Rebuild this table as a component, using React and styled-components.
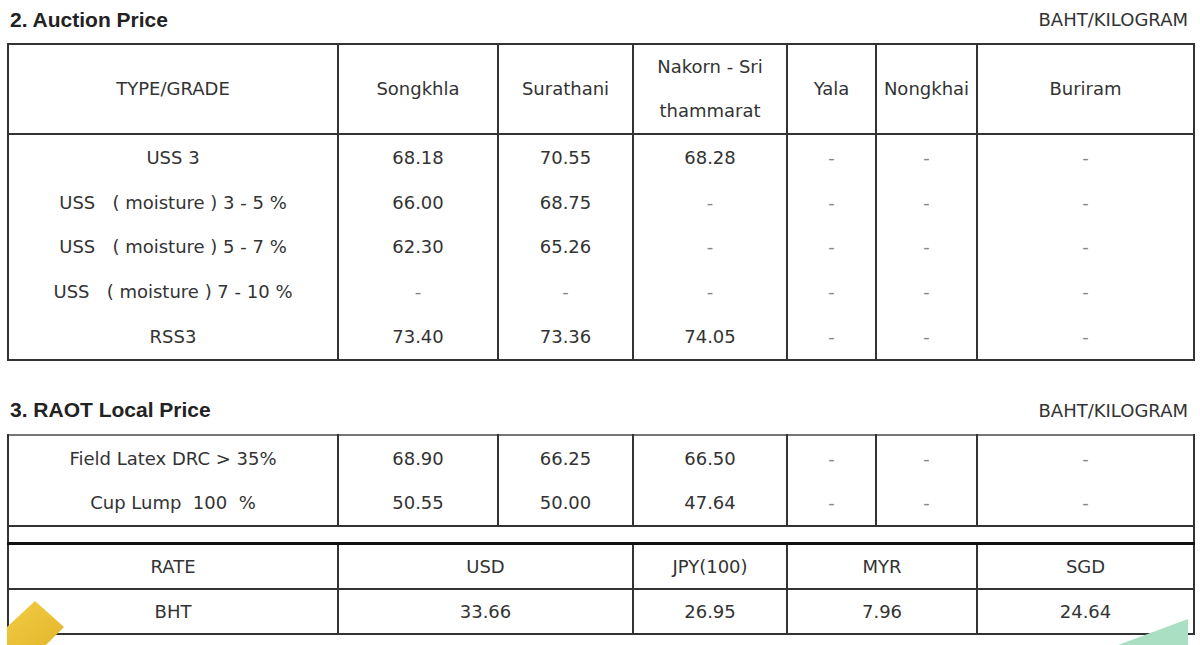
import React from "react";
import styled, { createGlobalStyle } from "styled-components";

const GlobalStyle = createGlobalStyle`
  body {
    margin: 0;
    background: #fff;
    font-family: "DejaVu Sans", "Liberation Sans", sans-serif;
  }
`;

const Page = styled.div`
  position: relative;
  width: 1200px;
  height: 645px;
  overflow: hidden;
  padding: 0 7px;
  box-sizing: border-box;
  background: #fff;
`;

const SectionHead = styled.div`
  display: flex;
  justify-content: space-between;
  align-items: center;
  height: 43px;
  padding: 0 5px 4px 3px;
  box-sizing: border-box;
  margin-top: ${(p) => p.$gap || 0}px;
`;

const Title = styled.h2`
  margin: 0;
  font-family: "Liberation Sans", Arial, sans-serif;
  font-weight: bold;
  font-size: 21px;
  color: #222;
`;

const Unit = styled.span`
  font-size: 18px;
  color: #333;
`;

const PriceTable = styled.table`
  width: 100%;
  border-collapse: collapse;
  table-layout: fixed;
  font-size: 18px;
  color: #333;
  border: 2px solid #333;
  border-top-color: ${(p) => p.$topColor || "#333"};
`;

const HeadCell = styled.th`
  font-weight: normal;
  height: 85px;
  padding: 0;
  line-height: 44px;
  border: 2px solid #333;
  text-align: center;
`;

const Cell = styled.td`
  height: ${(p) => (p.$ruled ? 43 : 44.75)}px;
  padding: 0;
  text-align: center;
  white-space: pre;
  border-left: 2px solid #333;
  border-right: 2px solid #333;
  border-bottom: ${(p) => (p.$ruled ? "2px solid #333" : "none")};
  color: ${(p) => (p.$dash ? "#888" : "#333")};
`;

const SpacerCell = styled.td`
  height: 15px;
  padding: 0;
  border-left: 2px solid #333;
  border-right: 2px solid #333;
  border-top: 2px solid #333;
  border-bottom: 3px solid #111;
`;

const Decor = styled.svg`
  position: absolute;
  bottom: 0;
  left: ${(p) => (p.$left != null ? `${p.$left}px` : "auto")};
  right: ${(p) => (p.$right != null ? `${p.$right}px` : "auto")};
`;

const widths = [330, 160, 135, 154, 89, 101, 217];

const auction = [
  ["USS 3", "68.18", "70.55", "68.28", "-", "-", "-"],
  ["USS   ( moisture ) 3 - 5 %", "66.00", "68.75", "-", "-", "-", "-"],
  ["USS   ( moisture ) 5 - 7 %", "62.30", "65.26", "-", "-", "-", "-"],
  ["USS   ( moisture ) 7 - 10 %", "-", "-", "-", "-", "-", "-"],
  ["RSS3", "73.40", "73.36", "74.05", "-", "-", "-"],
];

const local = [
  ["Field Latex DRC > 35%", "68.90", "66.25", "66.50", "-", "-", "-"],
  ["Cup Lump  100  %", "50.55", "50.00", "47.64", "-", "-", "-"],
];

const rateHead = [
  ["RATE", 1],
  ["USD", 2],
  ["JPY(100)", 1],
  ["MYR", 2],
  ["SGD", 1],
];
const rateRow = [
  ["BHT", 1],
  ["33.66", 2],
  ["26.95", 1],
  ["7.96", 2],
  ["24.64", 1],
];

function Cols() {
  return (
    <colgroup>
      {widths.map((w, i) => (
        <col key={i} style={{ width: w }} />
      ))}
    </colgroup>
  );
}

function DataRow({ row, ruled }) {
  return (
    <tr>
      {row.map((v, i) => (
        <Cell key={i} $dash={v === "-"} $ruled={ruled}>
          {v}
        </Cell>
      ))}
    </tr>
  );
}

function SpanRow({ row }) {
  return (
    <tr>
      {row.map(([v, span], i) => (
        <Cell key={i} colSpan={span} $ruled>
          {v}
        </Cell>
      ))}
    </tr>
  );
}

export default function App() {
  return (
    <Page>
      <GlobalStyle />
      <SectionHead>
        <Title>2. Auction Price</Title>
        <Unit>BAHT/KILOGRAM</Unit>
      </SectionHead>
      <PriceTable>
        <Cols />
        <thead>
          <tr>
            <HeadCell>TYPE/GRADE</HeadCell>
            <HeadCell>Songkhla</HeadCell>
            <HeadCell>Surathani</HeadCell>
            <HeadCell>
              Nakorn - Sri
              <br />
              thammarat
            </HeadCell>
            <HeadCell>Yala</HeadCell>
            <HeadCell>Nongkhai</HeadCell>
            <HeadCell>Buriram</HeadCell>
          </tr>
        </thead>
        <tbody>
          {auction.map((r, i) => (
            <DataRow key={i} row={r} />
          ))}
        </tbody>
      </PriceTable>

      <SectionHead $gap={30}>
        <Title>3. RAOT Local Price</Title>
        <Unit>BAHT/KILOGRAM</Unit>
      </SectionHead>
      <PriceTable $topColor="#777">
        <Cols />
        <tbody>
          {local.map((r, i) => (
            <DataRow key={i} row={r} />
          ))}
          <tr>
            <SpacerCell colSpan={7} />
          </tr>
          <SpanRow row={rateHead} />
          <SpanRow row={rateRow} />
        </tbody>
      </PriceTable>

      <Decor $left={0} width="70" height="46" viewBox="0 0 70 46">
        <defs>
          <linearGradient id="yel" x1="0" y1="0" x2="1" y2="1">
            <stop offset="0" stopColor="#f2cd44" />
            <stop offset="1" stopColor="#e2b62c" />
          </linearGradient>
        </defs>
        <polygon points="35,2 64,28 46,46 7,46 7,28" fill="url(#yel)" />
      </Decor>
      <Decor $right={10} width="72" height="26" viewBox="0 0 72 26">
        <polygon points="70,0 70,26 0,26" fill="#abdfc4" />
      </Decor>
    </Page>
  );
}
